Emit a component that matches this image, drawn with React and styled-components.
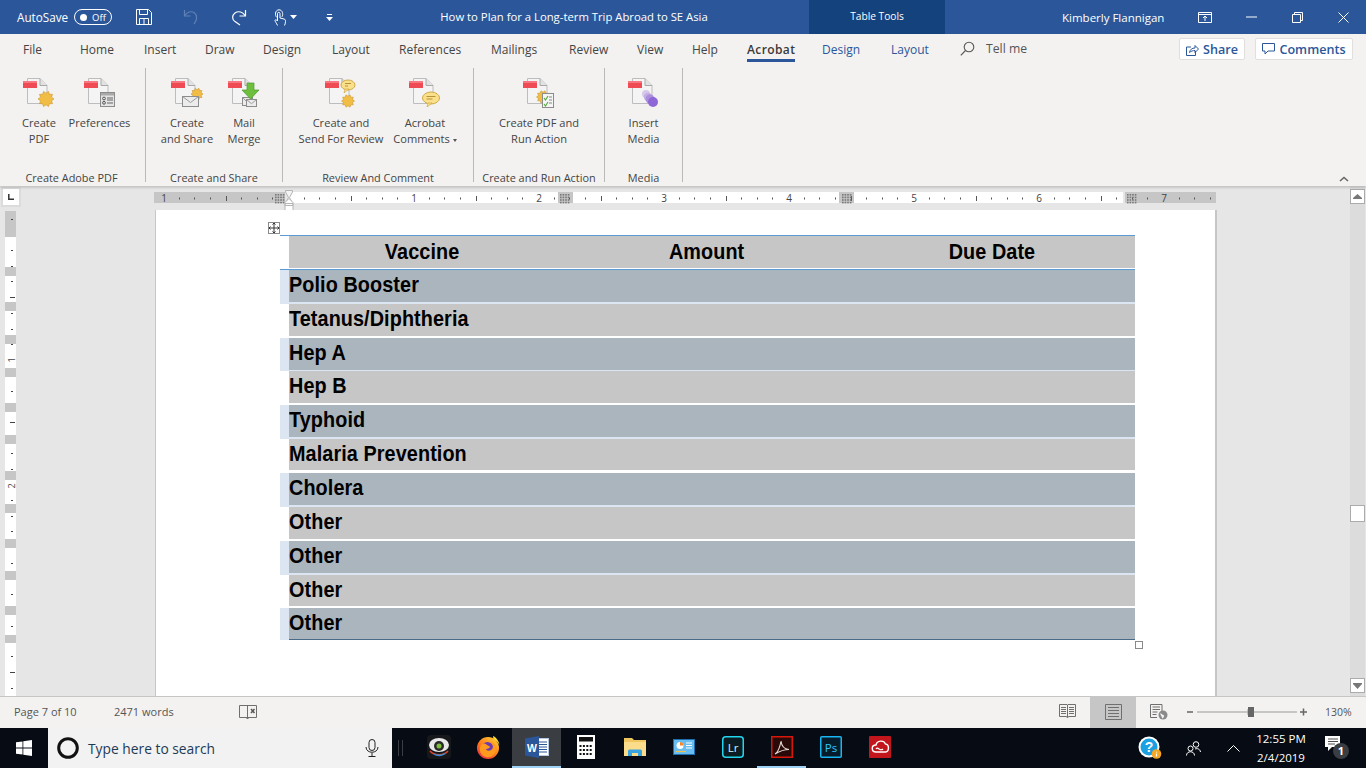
import React from "react";
import styled, { createGlobalStyle } from "styled-components";

const UI = `"Open Sans", "Noto Sans", sans-serif`;

const Global = createGlobalStyle`
  html, body { margin: 0; padding: 0; background: #e6e6e6; overflow: hidden; }
  * { box-sizing: border-box; }
`;

const Shell = styled.div`
  width: 1366px; height: 768px; display: flex; flex-direction: column;
  overflow: hidden; font-family: ${UI}; background: #e6e6e6;
`;

/* ---------- title bar ---------- */
const TitleBar = styled.header`
  height: 34px; flex: none; display: flex; align-items: center;
  background: #2b579a; color: #fff; padding-left: 17px;
`;
const AutoSave = styled.span`font-size: 11.7px; width: 57px;`;
const Toggle = styled.span`
  width: 38px; height: 16px; border: 1px solid #fff; border-radius: 8px;
  display: flex; align-items: center; padding-left: 5px; gap: 5px;
  font-size: 9.5px; margin-right: 8px; flex: none;
`;
const ToggleDot = styled.i`width: 7px; height: 7px; border-radius: 50%; background: #fff; display: block;`;
const QatSlot = styled.span`
  width: ${(p) => p.$w}px; height: 34px; flex: none; display: flex; align-items: center;
  justify-content: center; gap: 3px;
`;
const DocTitle = styled.div`
  width: 459px; flex: none; text-align: center; padding: 0 11px 2px 0; font-size: 11.3px; white-space: nowrap;
`;
const ContextLabel = styled.div`
  width: 136px; height: 34px; flex: none; background: #14427c; display: flex; padding-bottom: 2px;
  align-items: center; justify-content: center; font-size: 10.2px;
`;
const UserName = styled.div`font-size: 11.5px; margin-left: 117px; white-space: nowrap;`;
const WindowButtons = styled.div`margin-left: auto; display: flex;`;
const WinBtn = styled.span`width: 46px; height: 34px; display: flex; align-items: center; justify-content: center;`;

/* ---------- tabs ---------- */
const TabBar = styled.nav`
  height: 34px; flex: none; display: flex; align-items: flex-start;
  background: #f3f2f1; padding-left: 23px; color: #444;
`;
const Tab = styled.div`
  width: ${(p) => p.$w}px; flex: none; height: 34px; font-size: 12px; line-height: 32px;
  color: ${(p) => (p.$ctx ? "#2b579a" : "#444")}; white-space: nowrap;
`;
const TabLabel = styled.span`
  display: inline-block; height: 28px; letter-spacing: ${(p) => (p.$on ? "0.4px" : "0")};
  font-weight: ${(p) => (p.$on ? 600 : 400)}; color: ${(p) => (p.$on ? "#3a3a3a" : "inherit")};
  border-bottom: ${(p) => (p.$on ? "3px solid #2b579a" : "none")};
`;
const TellMe = styled.div`
  display: flex; align-items: center; gap: 11px; height: 29px; font-size: 12.2px; color: #555; flex: none;
`;
const TabActions = styled.div`margin-left: auto; display: flex; gap: 10px; padding: 4px 13px 0 0;`;
const ActionBtn = styled.button`
  width: ${(p) => p.$w}px; height: 22px; border: 1px solid #e1dfdd; background: #fff; border-radius: 2px;
  display: flex; align-items: center; justify-content: center; gap: 4px; padding: 0;
  color: #2b579a; font: 600 12.6px ${UI};
`;

/* ---------- ribbon ---------- */
const Ribbon = styled.section`
  height: 118px; flex: none; display: flex; position: relative; z-index: 2; background: #f3f2f1;
  box-shadow: 0 2px 2px rgba(0, 0, 0, 0.14);
`;
const Group = styled.div`
  width: ${(p) => p.$w}px; height: 114px; flex: none; display: flex; flex-direction: column;
  border-right: 1px solid #b9b9b9;
`;
const GroupButtons = styled.div`flex: 1; display: flex; padding-left: ${(p) => p.$pad || 0}px;`;
const RibbonBtn = styled.div`
  width: ${(p) => p.$w}px; flex: none; display: flex; flex-direction: column; align-items: center;
  padding-top: 9px; color: #444; font-size: 11.1px; line-height: 16px; text-align: center; white-space: nowrap;
  svg { display: block; margin-bottom: 6px; }
`;
const GroupLabel = styled.div`
  height: 16px; font-size: 10.9px; line-height: 16px; text-align: center; color: #444; white-space: nowrap;
  padding-right: ${(p) => p.$shift || 0}px; margin-bottom: -4px;
`;
const Collapse = styled.span`position: absolute; right: 17px; bottom: 4px; display: flex;`;
const Caret = styled.i`
  display: inline-block; width: 0; height: 0; margin-left: 3px; vertical-align: middle;
  border-left: 2.5px solid transparent; border-right: 2.5px solid transparent; border-top: 3px solid #555;
`;

/* ---------- workspace ---------- */
const Main = styled.div`flex: 1; min-height: 0; display: flex; background: #e6e6e6;`;
const Workspace = styled.div`flex: 1; min-width: 0; display: flex; flex-direction: column;`;
const RulerRow = styled.div`height: 24px; flex: none; display: flex; align-items: flex-start;`;
const TabStop = styled.div`
  width: 16px; height: 16px; margin: 3px 0 0 3px; background: #fff; box-shadow: 0 0 0 2px #dcdcdc;
  display: flex; align-items: center; justify-content: center; flex: none;
`;
const HRuler = styled.svg`margin-left: 135px; flex: none; display: block; overflow: visible;`;
const DocRow = styled.div`flex: 1; min-height: 0; display: flex;`;
const VRuler = styled.div`
  width: 11px; margin: 1px 0 0 5px; flex: none; height: 485px; display: flex; flex-direction: column;
  background: #c6c6c6; position: relative;
`;
const VSeg = styled.div`
  flex: none; height: ${(p) => p.$h}px; background: ${(p) => (p.$white ? "#fff" : "#c6c6c6")};
`;
const VTick = styled.i`
  position: absolute; display: block; height: 1px; left: ${(p) => (p.$long ? 5 : 6)}px;
  width: ${(p) => (p.$long ? 5 : 2)}px; background: #444;
`;
const VNum = styled.span`
  position: absolute; left: 1px; width: 11px; height: 10px; text-align: center; color: #444; font-size: 9px;
  line-height: 10px; transform: rotate(-90deg);
`;
const Page = styled.div`
  width: 1062px; margin-left: 139px; flex: none; background: #fff; border-left: 1px solid #c6c6c6;
  border-right: 2px solid #c6c6c6; padding: 25px 0 0 124px; position: relative;
`;
const MoveHandle = styled.span`
  position: absolute; left: 112px; top: 12px; width: 12px; height: 12px; border: 1px solid #8a8a8a;
  background: #fff; display: flex; align-items: center; justify-content: center;
`;
const ResizeHandle = styled.span`
  position: absolute; left: 979px; top: 431px; width: 8px; height: 8px; border: 1px solid #8a8a8a; background: #fff;
`;
const Table = styled.div`width: 855px; display: flex; flex-direction: column; color: #000;`;
const BlueRule = styled.div`height: 1px; background: #5b9bd5;`;
const Row = styled.div`display: flex;`;
const Strip = styled.div`width: 9px; flex: none; background: ${(p) => p.$bg};`;
const HeaderCells = styled.div`
  width: 846px; height: 33px; border-bottom: 1px solid #fff; background: #c6c6c6;
  display: grid; grid-template-columns: 266px 304px 276px; align-items: center;
`;
const BodyCell = styled.div`
  width: 846px; height: ${(p) => p.$h}px; background: ${(p) => p.$bg}; display: flex; align-items: center;
  padding-bottom: 2px;
`;
const Sep = styled.div`height: ${(p) => p.$h}px; background: ${(p) => p.$bg};`;
const CellText = styled.span`
  display: inline-block; font: 700 22.4px "Liberation Sans", Arial, sans-serif; line-height: 30px; white-space: nowrap;
  transform: scaleX(0.885); transform-origin: ${(p) => (p.$center ? "center" : "left center")};
  letter-spacing: 0.1px;
`;
const HeadCell = styled.div`text-align: center; padding-right: ${(p) => p.$shift || 0}px;`;

const ScrollBar = styled.aside`
  width: 15px; margin-right: 1px; flex: none; background: #dcdcdc; display: flex; flex-direction: column;
  align-items: center; padding: 3px 0 3px;
`;
const ScrollBtn = styled.span`
  width: 15px; height: 15px; background: #fff; border: 1px solid #ababab; flex: none;
  display: flex; align-items: center; justify-content: center;
`;
const ScrollThumb = styled.span`
  width: 15px; height: 17px; background: #fff; border: 1px solid #ababab; flex: none;
  margin-top: 301px; margin-bottom: auto;
`;

/* ---------- status bar ---------- */
const StatusBar = styled.footer`
  height: 32px; flex: none; display: flex; align-items: stretch; background: #f3f2f1;
  border-top: 1px solid #c6c6c6; color: #555; font-size: 11px; position: relative; z-index: 1;
`;
const StatusLeft = styled.div`display: flex; align-items: center; padding: 0 0 2px 14px;`;
const StatusText = styled.span`width: ${(p) => p.$w}px; flex: none; white-space: nowrap;`;
const StatusRight = styled.div`margin-left: auto; display: flex; align-items: center; height: 100%;`;
const ViewGroup = styled.div`display: flex; margin-right: 5px;`;
const ViewBtn = styled.span`
  width: 46px; height: 31px; display: flex; align-items: center; justify-content: center; padding-bottom: 2px;
  background: ${(p) => (p.$on ? "#c6c6c6" : "transparent")};
`;
const ZoomArea = styled.div`display: flex; align-items: center; padding-bottom: 2px;`;
const ZoomPct = styled.span`margin: 0 14px 0 18px; font-size: 10.5px; width: 27px;`;

/* ---------- taskbar ---------- */
const Taskbar = styled.footer`height: 40px; flex: none; display: flex; align-items: center; background: #070c14;`;
const StartBtn = styled.span`width: 48px; height: 40px; display: flex; align-items: center; justify-content: center; flex: none;`;
const SearchBox = styled.div`
  width: 344px; height: 40px; background: #f2f2f2; display: flex; align-items: center; flex: none;
  padding: 0 13px 0 8px; color: #1d3b57; font-size: 13.8px;
`;
const SearchText = styled.span`margin-left: 8px; flex: 1; white-space: nowrap;`;
const Grip = styled.span`
  width: 5px; height: 16px; margin: 0 11px 0 6px; border-left: 1px solid #3a3e44; border-right: 1px solid #3a3e44; flex: none;
`;
const TaskItems = styled.div`display: flex;`;
const TaskItem = styled.span`
  width: 49px; height: 40px; display: flex; align-items: center; justify-content: center; position: relative;
  background: ${(p) => (p.$active ? "#3a3d42" : "transparent")};
  border-bottom: 2px solid ${(p) => (p.$open ? "#9fd3f5" : "transparent")};
`;
const Tray = styled.div`margin-left: auto; display: flex; align-items: center; height: 40px; color: #fff; padding-right: 10px;`;
const TrayIcon = styled.span`
  width: ${(p) => p.$w}px; flex: none; display: flex; align-items: center; justify-content: center;
`;
const Clock = styled.div`
  width: 74px; flex: none; text-align: center; font-size: 11.5px; line-height: 19.5px; white-space: nowrap;
`;

/* ---------- drawings ---------- */
const DocBase = () => (
  <>
    <path d="M5.5 1.5H18L25 8.5V26.5H5.5Z" fill="#f4f4f4" stroke="#bdbdbd" />
    <path d="M18 1.5V8.5H25" fill="#e2e2e2" stroke="#a8a8a8" />
    <rect x="1" y="4" width="14" height="7" fill="#ef4b55" />
    <rect x="1" y="4" width="14" height="2" fill="#f77880" />
  </>
);
const Burst = ({ cx, cy, r }) => {
  const pts = [];
  for (let i = 0; i < 20; i++) {
    const a = (i * Math.PI) / 10;
    const rr = i % 2 ? r * 0.72 : r;
    pts.push(`${(cx + rr * Math.cos(a)).toFixed(1)},${(cy + rr * Math.sin(a)).toFixed(1)}`);
  }
  return <polygon points={pts.join(" ")} fill="#f2bd45" stroke="#c9962d" strokeWidth="0.6" />;
};
const Bubble = ({ cx, cy, rx, ry }) => (
  <>
    <ellipse cx={cx} cy={cy} rx={rx} ry={ry} fill="#fbe08c" stroke="#d0a946" />
    <path d={`M${cx - 3} ${cy + ry - 1}l-1 4 5-4z`} fill="#fbe08c" stroke="#d0a946" strokeWidth="0.7" />
    <path d={`M${cx - rx + 4} ${cy - 1.5}h${rx * 2 - 8}M${cx - rx + 4} ${cy + 1}h${rx * 2 - 11}`} stroke="#b8923a" />
  </>
);
const Envelope = ({ x, y, w, h }) => (
  <>
    <rect x={x} y={y} width={w} height={h} fill="#ececec" stroke="#8c8c8c" />
    <path d={`M${x} ${y}l${w / 2} ${h * 0.6} ${w / 2} ${-h * 0.6}`} fill="none" stroke="#9a9a9a" />
  </>
);
const RibbonIcon = ({ kind }) => (
  <svg width="34" height="32" viewBox="0 0 34 32">
    <DocBase />
    {kind === "pdf" && <Burst cx={24} cy={22} r={8} />}
    {kind === "prefs" && (
      <>
        <rect x="17.5" y="15.5" width="14" height="14" fill="#e4e4e4" stroke="#8c8c8c" />
        <rect x="18" y="16" width="13" height="2.5" fill="#a9a9a9" />
        <circle cx="21" cy="21.5" r="1.4" fill="none" stroke="#555" />
        <circle cx="21" cy="25.8" r="1.4" fill="none" stroke="#555" />
        <path d="M24 21h6M24 23h6M24 26h6" stroke="#666" />
      </>
    )}
    {kind === "share" && (
      <>
        <Burst cx={27} cy={17} r={6} />
        <Envelope x={12.5} y={19.5} w={16} h={10} />
      </>
    )}
    {kind === "merge" && (
      <>
        <Envelope x={15.5} y={20.5} w={10} h={8} />
        <Envelope x={19.5} y={22.5} w={10} h={7} />
        <path d="M20 6h7v7h5l-8.5 9L15 13h5z" fill="#6fbf3f" stroke="#4f9a2b" strokeWidth="0.7" />
      </>
    )}
    {kind === "review" && (
      <>
        <Bubble cx={24} cy={8} rx={7} ry={5} />
        <Burst cx={24} cy={24} r={6.5} />
      </>
    )}
    {kind === "comments" && <Bubble cx={23} cy={21} rx={8.5} ry={6} />}
    {kind === "action" && (
      <>
        <Burst cx={21} cy={20} r={6.5} />
        <rect x="20.5" y="16.5" width="11" height="14" fill="#f5f5f5" stroke="#8c8c8c" />
        <path d="M22 21l1.5 2 2.5-4M22 27l1.5 2 2.5-4" fill="none" stroke="#53a83a" strokeWidth="1.1" />
        <path d="M27 20h3M27 23h3M27 26h3" stroke="#888" />
      </>
    )}
    {kind === "media" && (
      <>
        <circle cx="19" cy="17" r="4" fill="#d6c8ea" />
        <circle cx="21" cy="20" r="4.2" fill="#c3aee4" />
        <circle cx="23" cy="22" r="4.5" fill="#ab8fdc" />
        <circle cx="26" cy="25" r="5" fill="#8e66d6" />
      </>
    )}
  </svg>
);

const white = { fill: "none", stroke: "#fff", strokeWidth: 1 };
const SaveIcon = () => (
  <svg width="16" height="16" viewBox="0 0 16 16" {...white}>
    <path d="M.5.5h12l3 3v12H.5z" /><path d="M3.5.5v5h8v-5M3.5 15.5v-6h9v6M8 10v5" />
  </svg>
);
const UndoIcon = () => (
  <svg width="16" height="16" viewBox="0 0 16 16" fill="none" stroke="#5f81b5" strokeWidth="1.2">
    <path d="M1.5 1v6h6" /><path d="M1.8 6.8C4 3 8 1.5 11.5 4c3 2.3 2.8 7-.5 11" />
  </svg>
);
const RedoIcon = () => (
  <svg width="17" height="17" viewBox="0 0 17 17" fill="none" stroke="#fff" strokeWidth="1.2">
    <path d="M15.5 1v6h-6" /><path d="M15.2 6.8C13 3 8.5 1.5 5 4c-3.3 2.5-3 6.800 0 8.500l5 3.500" />
  </svg>
);
const TouchIcon = () => (
  <svg width="14" height="17" viewBox="0 0 14 17" {...white}>
    <path d="M4 8.500C1.500 6.500 2 1 6 .8c3.500 0 4.500 4.500 3 7" />
    <path d="M4.500 16.500C3.500 14 2 12.500 2 11.500c0-1 1.500-1 2.500.5V4.500c0-1.600 2.500-1.600 2.500 0V9l4 1c1.500.4 1.500 1.500 1.500 2.500 0 1.500-.5 3-1 4" />
  </svg>
);
const WhiteCaret = () => <svg width="7" height="4" viewBox="0 0 7 4"><path d="M0 0h7L3.500 4z" fill="#fff" /></svg>;
const QatCaret = () => (
  <svg width="7" height="7" viewBox="0 0 7 7"><path d="M1 .5h5" stroke="#fff" /><path d="M0 3h7L3.500 7z" fill="#fff" /></svg>
);
const DisplayOptions = () => (
  <svg width="14" height="11" viewBox="0 0 14 11" {...white}>
    <path d="M.5.5h13v10H.5zM.5 2.500h13M7 9V4.500M5 6l2-2 2 2" />
  </svg>
);
const MinIcon = () => <svg width="11" height="2" viewBox="0 0 11 2"><path d="M0 1h11" stroke="#fff" /></svg>;
const RestoreIcon = () => (
  <svg width="11" height="11" viewBox="0 0 11 11" {...white}><path d="M.5 2.500h8v8h-8zM2.500 2.500v-2h8v8h-2" /></svg>
);
const CloseIcon = () => <svg width="11" height="11" viewBox="0 0 11 11" {...white}><path d="M.5.5l10 10M10.500.5l-10 10" /></svg>;
const SearchGlass = () => (
  <svg width="15" height="15" viewBox="0 0 15 15" fill="none" stroke="#555" strokeWidth="1.1">
    <circle cx="9" cy="6" r="4.800" /><path d="M5.500 9.500L.8 14.300" />
  </svg>
);
const ShareIcon = () => (
  <svg width="13" height="13" viewBox="0 0 13 13" fill="none" stroke="#2b579a">
    <path d="M5 4H.5v8.500h9V8" /><path d="M3.500 9.500C4 6.500 6 5 9 5V2.500L12.500 6 9 9.500V7.500c-2 0-4 .5-5.500 2z" />
  </svg>
);
const CommentIcon = () => (
  <svg width="13" height="12" viewBox="0 0 13 12" fill="none" stroke="#2b579a"><path d="M.5.500h12v7.500H6L3 11V8H.5z" /></svg>
);
const Chevron = () => (
  <svg width="10" height="6" viewBox="0 0 10 6" fill="none" stroke="#666" strokeWidth="1.600"><path d="M1 5l4-3.500L9 5" /></svg>
);
const TabStopMark = () => (
  <svg width="6" height="6" viewBox="0 0 6 6" fill="none" stroke="#333" strokeWidth="1.500"><path d="M.8 0v5.200H6" /></svg>
);
const GridMark = ({ x }) => {
  const d = [];
  for (let i = 0; i < 4; i++) for (let j = 0; j < 4; j++) d.push(<rect key={`${i}${j}`} x={x + i * 2.600} y={8 + j * 2.600} width="1.600" height="1.600" fill="#777" />);
  return <>{d}</>;
};
const Ruler = () => {
  const zero = 134; // 288 page px relative to ruler start (154)
  const ticks = [];
  for (let k = -9; k <= 62; k++) {
    if (k % 8 === 0) continue;
    const x = Math.round(zero + k * 15.625);
    if (x > 1058 || x < 4) continue;
    const long = k % 4 === 0;
    ticks.push(<rect key={k} x={x} y={long ? 10 : 11.500} width="1" height={long ? 5 : 2} fill="#555" />);
  }
  const nums = [-1, 1, 2, 3, 4, 5, 6, 7];
  return (
    <HRuler width="1062" height="24" viewBox="0 0 1062 24">
      <rect x="0" y="6" width="131" height="11" fill="#c6c6c6" />
      <rect x="135" y="6" width="834" height="11" fill="#fff" />
      <rect x="971" y="6" width="91" height="11" fill="#c6c6c6" />
      <rect x="404" y="6" width="15" height="11" fill="#c6c6c6" />
      <rect x="685" y="6" width="15" height="11" fill="#c6c6c6" />
      {ticks}
      {nums.map((n) => (
        <text key={n} x={zero + n * 125 + 1} y="15.500" fontSize="10" fill="#444" textAnchor="middle" fontFamily={UI}>
          {Math.abs(n)}
        </text>
      ))}
      <GridMark x={121} /><GridMark x={406} /><GridMark x={688} /><GridMark x={973} />
      <path d="M131.500 4.500h7v1.500l-3 5.500 3 5.500v1h-7v-1l3-5.500-3-5.500z" fill="#f3f3f3" stroke="#b5b5b5" />
      <path d="M135 12.500l4 4v3h-8v-3z M131 17.500h8v7h-8z" fill="#fff" stroke="#b5b5b5" />
    </HRuler>
  );
};
const Tri = ({ up }) => (
  <svg width="9" height="6" viewBox="0 0 9 6">
    {up ? <path d="M4.500 0L9 4v1H0V4z" fill="#777" /> : <path d="M0 0h9v1L4.500 6 0 1z" fill="#777" />}
  </svg>
);
const gray = { fill: "none", stroke: "#6f6f6f", strokeWidth: 1 };
const ReadIcon = () => (
  <svg width="17" height="15" viewBox="0 0 17 15" {...gray}>
    <path d="M.5.500h7.500l.5.500.5-.5h7.500v12h-7l-1 1.500-1-1.500h-7zM8.500 1v12" />
    <path d="M2 3.500h5M2 5.500h5M2 7.500h5M2 9.500h5M10 3.500h5M10 5.500h5M10 7.500h5M10 9.500h5" />
  </svg>
);
const PrintIcon = () => (
  <svg width="17" height="16" viewBox="0 0 17 16" {...gray}>
    <path d="M.5.500h16v15H.5zM3 3.500h11M3 6.500h11M3 9.500h11M3 12.500h11" />
  </svg>
);
const WebIcon = () => (
  <svg width="18" height="16" viewBox="0 0 18 16">
    <g {...gray}><path d="M12 9V.5H.5v13H7M2.500 3h7.500M2.500 5.500h7.500M2.500 8h5M2.500 10.500h4" /></g>
    <circle cx="13" cy="11" r="4.500" fill="#8a8a8a" />
    <path d="M10 9.500c2-.5 2 1.500 3.500 1.500s0 3-1 3.500" fill="#f3f2f1" />
  </svg>
);
const ProofIcon = () => (
  <svg width="18" height="16" viewBox="0 0 18 16" {...gray}>
    <path d="M8.500 1.500H.5v12h8M8.500 1v14l-1-1M8.500 15l1-1M9 1.500h8.500v12H9" />
    <path d="M12 5l3.500 4M15.500 5L12 9" stroke="#555" strokeWidth="1.500" />
  </svg>
);
const ZoomSlider = () => (
  <svg width="120" height="12" viewBox="0 0 120 12">
    <path d="M0 6h6M113 6h7M116.500 2.500v7" stroke="#666" strokeWidth="1.500" />
    <path d="M10 6h100M61 3v6" stroke="#9a9a9a" />
    <rect x="61" y="1" width="6" height="10" fill="#666" />
  </svg>
);
const WinLogo = () => (
  <svg width="16" height="16" viewBox="0 0 16 16" fill="#fff">
    <path d="M0 2.300l6.500-.9v6.200H0zM7.300 1.300L16 0v7.600H7.300zM0 8.400h6.500v6.200L0 13.700zM7.300 8.400H16V16l-8.700-1.200z" />
  </svg>
);
const Cortana = () => (
  <svg width="24" height="24" viewBox="0 0 24 24" fill="none"><circle cx="12" cy="12" r="9.300" stroke="#111" strokeWidth="3" /></svg>
);
const Mic = () => (
  <svg width="14" height="18" viewBox="0 0 14 18" fill="none" stroke="#222">
    <rect x="4" y=".5" width="6" height="11" rx="3" /><path d="M1 8c0 7 12 7 12 0M7 14v3.500M3.500 17.500h7" />
  </svg>
);
const WebcamApp = () => (
  <svg width="24" height="24" viewBox="0 0 24 24">
    <rect width="24" height="24" rx="4" fill="#16181b" />
    <ellipse cx="12" cy="10" rx="10" ry="7" fill="#e8e8e8" />
    <circle cx="12" cy="11" r="5" fill="#2a2a2a" /><circle cx="12" cy="11" r="2.500" fill="#7bbf3a" />
    <path d="M3 16c4 5 14 5 18 0" fill="none" stroke="#e0442a" strokeWidth="1.500" />
    <path d="M7 19c3 2 8 2 11-.5" fill="none" stroke="#2f8fd8" strokeWidth="1.500" />
  </svg>
);
const Firefox = () => (
  <svg width="24" height="24" viewBox="0 0 24 24">
    <defs>
      <linearGradient id="ff" x1="0.8" y1="0" x2="0.1" y2="1"><stop offset="0" stopColor="#ffcb2e" /><stop offset="0.5" stopColor="#ff7a1c" /><stop offset="1" stopColor="#e8234a" /></linearGradient>
    </defs>
    <circle cx="12" cy="13" r="11" fill="url(#ff)" />
    <circle cx="11.500" cy="12.500" r="5.500" fill="#6c3bb0" />
    <path d="M5 10c3-3 5-1 6 0s3 1 3 2-3 2-4 2 2 3 5 1 3-6-1-9c3 1 7 4 6 9-.8 5-5 8-10 7C5 21 2 15 5 10z" fill="#ff9a1f" />
    <path d="M17 1c3 1 6 5 6.500 9-1.500-3-4-5-6-6z" fill="#ffdc3a" />
  </svg>
);
const WordApp = () => (
  <svg width="24" height="22" viewBox="0 0 24 22">
    <rect x="9" y="2.500" width="14.500" height="17" fill="#fff" stroke="#b7c7df" />
    <path d="M13 6h9M13 8.500h9M13 11h9M13 13.500h9M13 16h9" stroke="#2b579a" />
    <path d="M0 2.500L14 0v22L0 19.500z" fill="#2b579a" />
    <text x="7" y="15.500" fontSize="10.500" fontWeight="700" fill="#fff" textAnchor="middle" fontFamily="Liberation Sans">W</text>
  </svg>
);
const Calc = () => {
  const k = [];
  for (let r = 0; r < 3; r++) for (let c = 0; c < 4; c++) k.push(<rect key={`${r}${c}`} x={2.500 + c * 3.400} y={10 + r * 4} width="2" height="2" fill="#111" />);
  return (
    <svg width="18" height="24" viewBox="0 0 18 24">
      <rect width="18" height="24" fill="#fff" /><rect x="2" y="2" width="14" height="4.500" fill="#111" />{k}
    </svg>
  );
};
const Folder = () => (
  <svg width="22" height="18" viewBox="0 0 22 18">
    <path d="M0 0h8l2 2h12v16H0z" fill="#f0c65e" /><path d="M0 4h22v14H0z" fill="#fadc8b" />
    <path d="M4 18v-5c0-1 1-1.500 2-1.500h10c1 0 2 .5 2 1.500v5h-4v-3H8v3z" fill="#3aa4e0" />
  </svg>
);
const Panel = () => (
  <svg width="22" height="16" viewBox="0 0 22 16">
    <rect width="22" height="16" fill="#1e6fb0" /><rect x="1" y="1" width="20" height="14" fill="#69bdf0" />
    <circle cx="7" cy="6.500" r="3.500" fill="#fff" /><path d="M7 6.500V3a3.500 3.500 0 0 1 3.500 3.500z" fill="#f0882a" />
    <path d="M13 4h6M13 6.500h6M13 9h6" stroke="#fff" strokeWidth="1.200" /><path d="M3 12.500h10" stroke="#f2c14e" strokeWidth="1.200" />
  </svg>
);
const AppTile = ({ bg, border, color, label, radius = 1 }) => (
  <svg width="22" height="22" viewBox="0 0 22 22">
    <rect x=".75" y=".75" width="20.500" height="20.500" rx={radius} fill={bg} stroke={border} strokeWidth="1.500" />
    <text x="11" y="15.500" fontSize="11.500" fontFamily="Open Sans" fill={color} textAnchor="middle">{label}</text>
  </svg>
);
const AcrobatApp = () => (
  <svg width="22" height="22" viewBox="0 0 22 22">
    <rect x=".75" y=".75" width="20.500" height="20.500" fill="#2a0a08" stroke="#d8170a" strokeWidth="1.500" />
    <path d="M4 18c3-2 5-7 6-13 .5 5 3 8 8 8.500-5 0-9 1.500-14 4.500z" fill="none" stroke="#e6d8d4" strokeWidth="1.100" />
  </svg>
);
const CloudApp = () => (
  <svg width="22" height="22" viewBox="0 0 22 22">
    <rect width="22" height="22" rx="1" fill="#c3161c" />
    <path d="M7 16c-5 0-5-7 0-7 1-5 8-5 9.500-1 4 .5 4 8-.5 8z" fill="none" stroke="#fff" strokeWidth="1.400" />
    <path d="M7 13c2-3 4 3 7 0" fill="none" stroke="#fff" strokeWidth="1.200" />
  </svg>
);
const HelpTray = () => (
  <svg width="24" height="24" viewBox="0 0 24 24">
    <circle cx="11" cy="11" r="10.500" fill="#fff" /><circle cx="11" cy="11" r="8.500" fill="#1ba1e2" />
    <text x="11" y="16" fontSize="14" fontWeight="700" fill="#fff" textAnchor="middle" fontFamily="Liberation Sans">?</text>
    <circle cx="18.500" cy="18" r="4.800" fill="#f5a623" />
    <path d="M18.500 15.800v.8M18.500 17.500v3" stroke="#fff" strokeWidth="1.200" />
  </svg>
);
const People = () => (
  <svg width="15" height="15" viewBox="0 0 15 15" fill="none" stroke="#fff">
    <circle cx="10" cy="3.500" r="2.800" /><circle cx="4.500" cy="7.500" r="2.500" />
    <path d="M.5 14.500c0-5 8-5 8 0M9 8c2.500-1 5 0 5.500 3" />
  </svg>
);
const TrayChevron = () => <svg width="13" height="7" viewBox="0 0 13 7" fill="none" stroke="#fff"><path d="M.5 6.500l6-6 6 6" /></svg>;
const Notify = () => (
  <svg width="26" height="26" viewBox="0 0 26 26">
    <path d="M1 1h15v11H8l-4 4v-4H1z" fill="#fff" /><path d="M4 4h10M4 6.500h10M4 9h7" stroke="#222" strokeWidth="0.8" />
    <circle cx="17" cy="16" r="8" fill="#3a3d42" />
    <text x="17" y="20" fontSize="11" fontWeight="700" fill="#fff" textAnchor="middle" fontFamily="Open Sans">1</text>
  </svg>
);

/* ---------- data ---------- */
const TABS = [
  ["File", 57], ["Home", 64], ["Insert", 61], ["Draw", 58], ["Design", 69], ["Layout", 67],
  ["References", 92], ["Mailings", 78], ["Review", 68], ["View", 55], ["Help", 55],
  ["Acrobat", 75, "on"], ["Design", 69, "ctx"], ["Layout", 69, "ctx"],
];
const GROUPS = [
  { w: 146, pad: 9, label: "Create Adobe PDF", shift: 2, btns: [
    { w: 60, k: "pdf", t: ["Create", "PDF"] }, { w: 61, k: "prefs", t: ["Preferences"] } ] },
  { w: 137, pad: 14, label: "Create and Share", shift: 0, btns: [
    { w: 54, k: "share", t: ["Create", "and Share"] }, { w: 60, k: "merge", t: ["Mail", "Merge"] } ] },
  { w: 191, pad: 11, label: "Review And Comment", shift: 0, btns: [
    { w: 94, k: "review", t: ["Create and", "Send For Review"] }, { w: 74, k: "comments", t: ["Acrobat", "Comments"], caret: true } ] },
  { w: 131, pad: 0, label: "Create and Run Action", shift: 0, btns: [
    { w: 130, k: "action", t: ["Create PDF and", "Run Action"] } ] },
  { w: 78, pad: 0, label: "Media", shift: 0, btns: [{ w: 77, k: "media", t: ["Insert", "Media"] }] },
];
const BLUE = "#aab5be";
const GREY = "#c6c6c6";
const PALE = "#dce6f2";
const ROWS = [
  { t: "Polio Booster", h: 32, sep: 2, blue: true },
  { t: "Tetanus/Diphtheria", h: 32, sep: 2 },
  { t: "Hep A", h: 32, sep: 1, blue: true },
  { t: "Hep B", h: 32, sep: 2 },
  { t: "Typhoid", h: 32, sep: 2, blue: true },
  { t: "Malaria Prevention", h: 31, sep: 3 },
  { t: "Cholera", h: 32, sep: 2, blue: true },
  { t: "Other", h: 32, sep: 2 },
  { t: "Other", h: 32, sep: 2, blue: true },
  { t: "Other", h: 31, sep: 2 },
  { t: "Other", h: 31, sep: 1, blue: true, last: true },
];
/* vertical ruler: alternating grey / white band heights, from the page top */
const VBANDS = [26, 30, 9, 26, 9, 24, 9, 24, 9, 26, 9, 23, 9, 27, 9, 24, 9, 26, 9, 23, 9, 26, 9, 20, 8, 53];
const VTICKS = [219, 250, 266, 281, 313, 329, 344, 391, 453, 469, 500, 516, 531, 563, 594, 626, 656, 688];
const VLONG = [297, 422, 672];
const VNUMS = [["1", 360], ["2", 486]];
const RULER_TOP = 211;

export default function App() {
  return (
    <Shell>
      <Global />
      <TitleBar>
        <AutoSave>AutoSave</AutoSave>
        <Toggle><ToggleDot />Off</Toggle>
        <QatSlot $w={48}><SaveIcon /></QatSlot>
        <QatSlot $w={46}><UndoIcon /></QatSlot>
        <QatSlot $w={48}><RedoIcon /></QatSlot>
        <QatSlot $w={46}><TouchIcon /><WhiteCaret /></QatSlot>
        <QatSlot $w={42}><QatCaret /></QatSlot>
        <DocTitle>How to Plan for a Long-term Trip Abroad to SE Asia</DocTitle>
        <ContextLabel>Table Tools</ContextLabel>
        <UserName>Kimberly Flannigan</UserName>
        <WindowButtons>
          <WinBtn><DisplayOptions /></WinBtn>
          <WinBtn><MinIcon /></WinBtn>
          <WinBtn><RestoreIcon /></WinBtn>
          <WinBtn><CloseIcon /></WinBtn>
        </WindowButtons>
      </TitleBar>

      <TabBar>
        {TABS.map(([t, w, f], i) => (
          <Tab key={i} $w={w} $ctx={f === "ctx"}><TabLabel $on={f === "on"}>{t}</TabLabel></Tab>
        ))}
        <TellMe><SearchGlass />Tell me</TellMe>
        <TabActions>
          <ActionBtn $w={66}><ShareIcon />Share</ActionBtn>
          <ActionBtn $w={98}><CommentIcon />Comments</ActionBtn>
        </TabActions>
      </TabBar>

      <Ribbon>
        {GROUPS.map((g) => (
          <Group key={g.label} $w={g.w}>
            <GroupButtons $pad={g.pad}>
              {g.btns.map((b) => (
                <RibbonBtn key={b.k} $w={b.w}>
                  <RibbonIcon kind={b.k} />
                  {b.t.map((line, i) => (
                    <span key={line}>{line}{b.caret && i === 1 && <Caret />}</span>
                  ))}
                </RibbonBtn>
              ))}
            </GroupButtons>
            <GroupLabel $shift={g.shift}>{g.label}</GroupLabel>
          </Group>
        ))}
        <Collapse><Chevron /></Collapse>
      </Ribbon>

      <Main>
        <Workspace>
          <RulerRow>
            <TabStop><TabStopMark /></TabStop>
            <Ruler />
          </RulerRow>
          <DocRow>
            <VRuler>
              {VBANDS.map((h, i) => <VSeg key={i} $h={h} $white={i % 2 === 1} />)}
              {VTICKS.map((y) => <VTick key={y} style={{ top: y - RULER_TOP }} />)}
              {VLONG.map((y) => <VTick key={y} $long style={{ top: y - RULER_TOP }} />)}
              {VNUMS.map(([n, y]) => <VNum key={n} style={{ top: y - RULER_TOP - 5 }}>{n}</VNum>)}
            </VRuler>
            <Page>
              <MoveHandle>
                <svg width="10" height="10" viewBox="0 0 10 10" fill="none" stroke="#333">
                  <path d="M5 0v10M0 5h10M3.500 1.500L5 0l1.500 1.500M3.500 8.500L5 10l1.500-1.500M1.500 3.500L0 5l1.500 1.500M8.500 3.500L10 5 8.500 6.500" />
                </svg>
              </MoveHandle>
              <Table>
                <BlueRule />
                <Row>
                  <Strip $bg="#fff" />
                  <HeaderCells>
                    <HeadCell><CellText $center>Vaccine</CellText></HeadCell>
                    <HeadCell><CellText $center>Amount</CellText></HeadCell>
                    <HeadCell $shift={10}><CellText $center>Due Date</CellText></HeadCell>
                  </HeaderCells>
                </Row>
                <BlueRule />
                {ROWS.map((r, i) => (
                  <Row key={i}>
                    <Strip $bg={r.blue ? PALE : "#fff"} />
                    <div>
                      <BodyCell $h={r.h} $bg={r.blue ? BLUE : GREY}><CellText>{r.t}</CellText></BodyCell>
                      <Sep $h={r.sep} $bg={r.last ? "#4a6a8a" : r.blue ? PALE : "#fff"} />
                    </div>
                  </Row>
                ))}
              </Table>
              <ResizeHandle />
            </Page>
          </DocRow>
        </Workspace>
        <ScrollBar>
          <ScrollBtn><Tri up /></ScrollBtn>
          <ScrollThumb />
          <ScrollBtn><Tri /></ScrollBtn>
        </ScrollBar>
      </Main>

      <StatusBar>
        <StatusLeft>
          <StatusText $w={100}>Page 7 of 10</StatusText>
          <StatusText $w={125}>2471 words</StatusText>
          <ProofIcon />
        </StatusLeft>
        <StatusRight>
          <ViewGroup>
            <ViewBtn><ReadIcon /></ViewBtn>
            <ViewBtn $on><PrintIcon /></ViewBtn>
            <ViewBtn><WebIcon /></ViewBtn>
          </ViewGroup>
          <ZoomArea>
            <ZoomSlider />
            <ZoomPct>130%</ZoomPct>
          </ZoomArea>
        </StatusRight>
      </StatusBar>

      <Taskbar>
        <StartBtn><WinLogo /></StartBtn>
        <SearchBox>
          <Cortana />
          <SearchText>Type here to search</SearchText>
          <Mic />
        </SearchBox>
        <Grip />
        <TaskItems>
          <TaskItem><WebcamApp /></TaskItem>
          <TaskItem><Firefox /></TaskItem>
          <TaskItem $active $open><WordApp /></TaskItem>
          <TaskItem><Calc /></TaskItem>
          <TaskItem><Folder /></TaskItem>
          <TaskItem><Panel /></TaskItem>
          <TaskItem><AppTile bg="#0b1d22" border="#22d6ee" color="#cdf6fb" label="Lr" radius={3} /></TaskItem>
          <TaskItem $open><AcrobatApp /></TaskItem>
          <TaskItem><AppTile bg="#061c2b" border="#19b5f1" color="#2ec6ff" label="Ps" /></TaskItem>
          <TaskItem><CloudApp /></TaskItem>
        </TaskItems>
        <Tray>
          <TrayIcon $w={28}><HelpTray /></TrayIcon>
          <TrayIcon $w={58}><People /></TrayIcon>
          <TrayIcon $w={22}><TrayChevron /></TrayIcon>
          <Clock>12:55 PM<br />2/4/2019</Clock>
          <TrayIcon $w={38}><Notify /></TrayIcon>
        </Tray>
      </Taskbar>
    </Shell>
  );
}
